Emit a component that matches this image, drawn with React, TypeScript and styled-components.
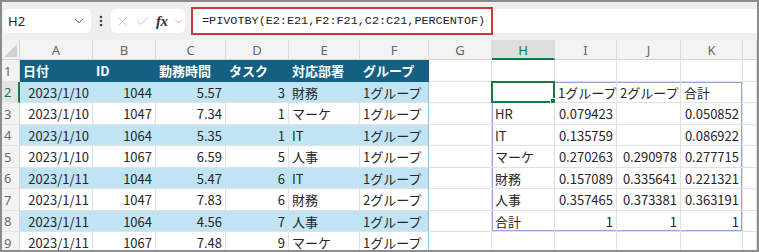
import React from 'react';
import styled, { createGlobalStyle } from 'styled-components';
import { X, Check, ChevronDown } from 'lucide-react';

// Sheet geometry (px), taken from the screenshot
const COL_WIDTHS = [18, 73, 63, 70, 63, 71, 69, 63, 63, 62, 64, 62];
const LETTERS = ['A', 'B', 'C', 'D', 'E', 'F', 'G', 'H', 'I', 'J', 'K'];

const HEAD_BLUE = '#156082';
const BAND_BLUE = '#C1E4F5';
const GRID = '#e1e1e1';
const SPILL = '#8aa8dc';
const EXCEL_GREEN = '#107c41';

const GlobalStyle = createGlobalStyle`
  html, body {
    margin: 0;
    padding: 0;
    background: #ffffff;
  }
  body {
    font-family: "Noto Sans CJK JP", "Noto Sans", sans-serif;
  }
`;

const Frame = styled.div`
  box-sizing: border-box;
  width: 759px;
  height: 252px;
  border: 2px solid #8c8c8c;
  overflow: hidden;
  background: #fff;
`;

const Toolbar = styled.div`
  height: 38px;
  display: flex;
  align-items: center;
  padding-left: 1px;
  background: #efefef;
`;

const NameBox = styled.div`
  box-sizing: border-box;
  width: 88px;
  height: 24px;
  padding: 0 5px 0 5px;
  display: flex;
  align-items: center;
  justify-content: space-between;
  background: #fff;
  border-radius: 5px;
  font-family: "Noto Sans", sans-serif;
  font-size: 13px;
  color: #262626;
`;

const Dots = styled.div`
  width: 20px;
  display: flex;
  justify-content: center;
  color: #444;
`;

const CommandBox = styled.div`
  box-sizing: border-box;
  width: 74px;
  height: 24px;
  padding-left: 4px;
  display: flex;
  align-items: center;
  gap: 5px;
  background: #fff;
  border-radius: 5px;
  color: #b9b9b9;
`;

const Fx = styled.span`
  font-family: "Liberation Serif", serif;
  font-style: italic;
  font-weight: 700;
  font-size: 15px;
  color: #333;
  letter-spacing: -0.5px;
  margin-left: 1px;
`;

const FormulaBar = styled.div`
  flex: 1;
  height: 24px;
  margin-left: 6px;
  display: flex;
  align-items: center;
  background: #fff;
`;

const FormulaText = styled.div`
  box-sizing: border-box;
  width: 302px;
  height: 28px;
  padding-left: 9px;
  display: flex;
  align-items: center;
  border: 2px solid #c93a36;
  font-family: "Liberation Mono", monospace;
  font-size: 11.8px;
  color: #222;
  white-space: nowrap;
`;

const Sheet = styled.div`
  display: grid;
  grid-template-columns: ${COL_WIDTHS.map((w) => `${w}px`).join(' ')} 1fr;
  grid-template-rows: 20px repeat(9, 21.5px);
`;

const Corner = styled.div`
  position: relative;
  background: #f3f3f3;
  border-right: 1px solid #d4d4d4;
  border-bottom: 1px solid #d4d4d4;
  &::after {
    content: '';
    position: absolute;
    right: 2px;
    bottom: 2px;
    border-style: solid;
    border-width: 0 0 13px 13px;
    border-color: transparent transparent #d0d0d0 transparent;
  }
`;

const ColHead = styled.div<{ $active?: boolean }>`
  box-sizing: border-box;
  display: flex;
  align-items: center;
  justify-content: center;
  padding-top: 1px;
  font-family: "Noto Sans", sans-serif;
  font-size: 13px;
  color: ${(p) => (p.$active ? EXCEL_GREEN : '#666')};
  background: ${(p) => (p.$active ? '#dedede' : '#f3f3f3')};
  border-right: 1px solid #dadada;
  border-bottom: ${(p) => (p.$active ? `2px solid ${EXCEL_GREEN}` : '1px solid #d4d4d4')};
`;

const RowHead = styled.div<{ $active?: boolean }>`
  box-sizing: border-box;
  display: flex;
  align-items: center;
  padding: 1px 0 0 2px;
  font-family: "Noto Sans", sans-serif;
  font-size: 13px;
  color: ${(p) => (p.$active ? EXCEL_GREEN : '#6a6a6a')};
  background: ${(p) => (p.$active ? '#e4e4e4' : '#f3f3f3')};
  border-right: ${(p) => (p.$active ? `2px solid ${EXCEL_GREEN}` : '1px solid #d4d4d4')};
  border-bottom: 1px solid #e4e4e4;
`;

type Fill = 'head' | 'band' | 'none';

const fillColor = (f?: Fill) => (f === 'head' ? HEAD_BLUE : f === 'band' ? BAND_BLUE : '#fff');

const Cell = styled.div<{ $fill?: Fill; $right?: boolean; $tableEdge?: boolean; $edges?: string }>`
  box-sizing: border-box;
  position: relative;
  display: flex;
  align-items: center;
  justify-content: ${(p) => (p.$right ? 'flex-end' : 'flex-start')};
  padding: 1px 3px 0;
  font-size: 13px;
  white-space: nowrap;
  color: ${(p) => (p.$fill === 'head' ? '#fff' : '#262626')};
  font-weight: ${(p) => (p.$fill === 'head' ? 700 : 400)};
  background: ${(p) => fillColor(p.$fill)};
  border-right: 1px solid
    ${(p) => (p.$tableEdge && p.$fill !== 'head' ? '#8fc1de' : p.$fill && p.$fill !== 'none' ? fillColor(p.$fill) : GRID)};
  border-bottom: 1px solid ${(p) => (p.$fill === 'head' ? HEAD_BLUE : GRID)};
  box-shadow: ${(p) => p.$edges || 'none'};
`;

const Selection = styled.div`
  position: absolute;
  inset: -1px -1px -1px -1px;
  border: 2px solid ${EXCEL_GREEN};
  pointer-events: none;
  &::after {
    content: '';
    position: absolute;
    right: -4px;
    bottom: -4px;
    width: 5px;
    height: 5px;
    background: ${EXCEL_GREEN};
    border: 1px solid #fff;
  }
`;

const headers = ['日付', 'ID', '勤務時間', 'タスク', '対応部署', 'グループ'];

const records = [
  ['2023/1/10', '1044', '5.57', '3', '財務', '1グループ'],
  ['2023/1/10', '1047', '7.34', '1', 'マーケ', '1グループ'],
  ['2023/1/10', '1064', '5.35', '1', 'IT', '1グループ'],
  ['2023/1/10', '1067', '6.59', '5', '人事', '1グループ'],
  ['2023/1/11', '1044', '5.47', '6', 'IT', '1グループ'],
  ['2023/1/11', '1047', '7.83', '6', '財務', '2グループ'],
  ['2023/1/11', '1064', '4.56', '7', '人事', '1グループ'],
  ['2023/1/11', '1067', '7.48', '9', 'マーケ', '1グループ'],
];

// spilled result of the PIVOTBY formula in H2
const pivot = [
  ['', '1グループ', '2グループ', '合計'],
  ['HR', '0.079423', '', '0.050852'],
  ['IT', '0.135759', '', '0.086922'],
  ['マーケ', '0.270263', '0.290978', '0.277715'],
  ['財務', '0.157089', '0.335641', '0.221321'],
  ['人事', '0.357465', '0.373381', '0.363191'],
  ['合計', '1', '1', '1'],
];

const spillEdges = (r: number, c: number) => {
  const s: string[] = [];
  if (r === 0) s.push(`inset 0 1px 0 ${SPILL}`);
  if (r === pivot.length - 1) s.push(`inset 0 -1px 0 ${SPILL}`);
  if (c === 0) s.push(`inset 1px 0 0 ${SPILL}`);
  if (c === 3) s.push(`inset -1px 0 0 ${SPILL}`);
  return s.join(', ');
};

const DotsIcon = () => (
  <svg width="4" height="12" viewBox="0 0 4 12">
    <circle cx="2" cy="2" r="1.3" fill="currentColor" />
    <circle cx="2" cy="6" r="1.3" fill="currentColor" />
    <circle cx="2" cy="10" r="1.3" fill="currentColor" />
  </svg>
);

const isNumeric = (v: string) => /^[0-9./]+$/.test(v);

export default function App() {
  const rows: React.ReactNode[] = [];

  for (let r = 0; r < 9; r++) {
    const rowNum = r + 1;
    rows.push(
      <RowHead key={`rh${r}`} $active={rowNum === 2}>
        {rowNum}
      </RowHead>
    );

    // A..F : the source table
    for (let c = 0; c < 6; c++) {
      if (r === 0) {
        rows.push(
          <Cell key={`t${r}-${c}`} $fill="head" $tableEdge={c === 5}>
            {headers[c]}
          </Cell>
        );
      } else {
        const v = records[r - 1][c];
        rows.push(
          <Cell
            key={`t${r}-${c}`}
            $fill={r % 2 === 1 ? 'band' : 'none'}
            $right={isNumeric(v)}
            $tableEdge={c === 5}
          >
            {v}
          </Cell>
        );
      }
    }

    // G : empty
    rows.push(<Cell key={`g${r}`} />);

    // H..K : pivot spill
    for (let c = 0; c < 4; c++) {
      const pr = r - 1;
      if (pr >= 0 && pr < pivot.length) {
        const v = pivot[pr][c];
        rows.push(
          <Cell key={`p${r}-${c}`} $right={pr > 0 && c > 0} $edges={spillEdges(pr, c)}>
            {v}
            {pr === 0 && c === 0 && <Selection />}
          </Cell>
        );
      } else {
        rows.push(<Cell key={`p${r}-${c}`} />);
      }
    }

    rows.push(<Cell key={`z${r}`} />);
  }

  return (
    <>
      <GlobalStyle />
      <Frame>
        <Toolbar>
          <NameBox>
            <span>H2</span>
            <ChevronDown size={14} strokeWidth={1.6} color="#444" />
          </NameBox>
          <Dots>
            <DotsIcon />
          </Dots>
          <CommandBox>
            <X size={15} strokeWidth={1.3} />
            <Check size={15} strokeWidth={1.3} />
            <Fx>fx</Fx>
            <ChevronDown size={11} strokeWidth={1.5} color="#999" />
          </CommandBox>
          <FormulaBar>
            <FormulaText>=PIVOTBY(E2:E21,F2:F21,C2:C21,PERCENTOF)</FormulaText>
          </FormulaBar>
        </Toolbar>
        <Sheet>
          <Corner />
          {LETTERS.map((l) => (
            <ColHead key={l} $active={l === 'H'}>
              {l}
            </ColHead>
          ))}
          <ColHead />
          {rows}
        </Sheet>
      </Frame>
    </>
  );
}
